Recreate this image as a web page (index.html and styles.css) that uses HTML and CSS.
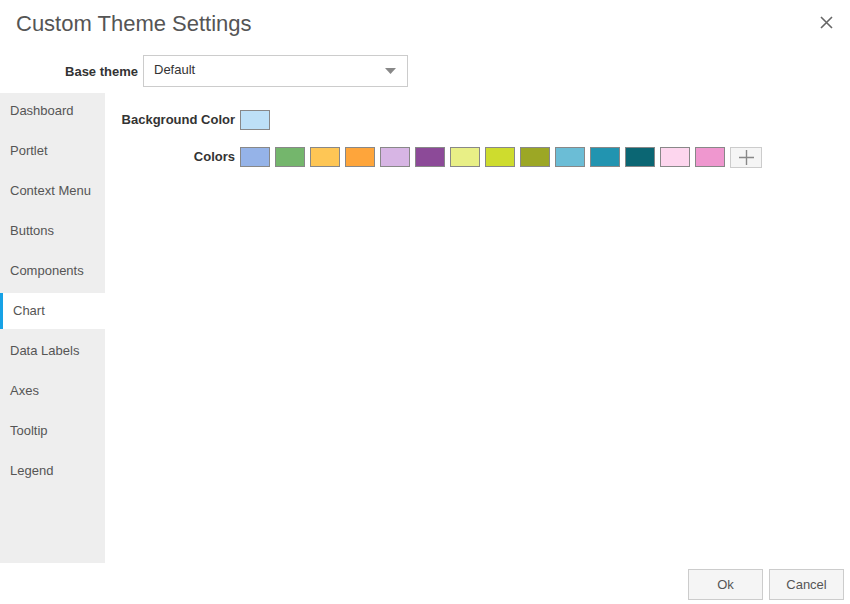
FILE: index.html
```html
<!DOCTYPE html>
<html>
<head>
<meta charset="utf-8">
<link rel="stylesheet" href="styles.css">
</head>
<body>
<div class="dialog">
  <div class="header">
    <h1 class="title">Custom Theme Settings</h1>
    <button class="close" aria-label="Close">
      <svg width="13" height="13" viewBox="0 0 13 13"><path d="M1 1L12 12M12 1L1 12" stroke="#666" stroke-width="1.6" fill="none"/></svg>
    </button>
  </div>
  <div class="base-row">
    <label class="base-label">Base theme</label>
    <div class="select">
      <span>Default</span>
      <svg class="arrow" width="11" height="6" viewBox="0 0 11 6"><path d="M0 0H11L5.5 6Z" fill="#888"/></svg>
    </div>
  </div>
  <div class="main">
    <ul class="sidebar">
      <li>Dashboard</li>
      <li>Portlet</li>
      <li>Context Menu</li>
      <li>Buttons</li>
      <li>Components</li>
      <li class="active">Chart</li>
      <li>Data Labels</li>
      <li>Axes</li>
      <li>Tooltip</li>
      <li>Legend</li>
    </ul>
    <div class="content">
      <div class="row">
        <div class="label">Background Color</div>
        <div class="swatches">
          <span class="swatch" style="background:#bde0f7"></span>
        </div>
      </div>
      <div class="row">
        <div class="label">Colors</div>
        <div class="swatches">
          <span class="swatch" style="background:#95b3e8"></span>
          <span class="swatch" style="background:#74b66c"></span>
          <span class="swatch" style="background:#fec655"></span>
          <span class="swatch" style="background:#fea53b"></span>
          <span class="swatch" style="background:#d7b5e4"></span>
          <span class="swatch" style="background:#8c4a98"></span>
          <span class="swatch" style="background:#e8ef86"></span>
          <span class="swatch" style="background:#cedc2e"></span>
          <span class="swatch" style="background:#9ca725"></span>
          <span class="swatch" style="background:#6bbdd6"></span>
          <span class="swatch" style="background:#2294b0"></span>
          <span class="swatch" style="background:#0b6673"></span>
          <span class="swatch" style="background:#fdd6ee"></span>
          <span class="swatch" style="background:#ef97cf"></span>
          <button class="add">
            <svg width="15" height="15" viewBox="0 0 15 15"><path d="M7.5 0V15M0 7.5H15" stroke="#888" stroke-width="1.4" fill="none"/></svg>
          </button>
        </div>
      </div>
    </div>
  </div>
  <div class="footer">
    <button class="btn">Ok</button>
    <button class="btn">Cancel</button>
  </div>
</div>
</body>
</html>
```
FILE: styles.css
```css
* { box-sizing: border-box; }
html, body {
  margin: 0;
  padding: 0;
  background: #fff;
  font-family: "Liberation Sans", Arial, sans-serif;
  color: #555;
}
.dialog {
  width: 850px;
  height: 604px;
  display: flex;
  flex-direction: column;
}
.header {
  height: 45px;
  display: flex;
  align-items: center;
  justify-content: space-between;
  padding: 0 17px 0 16px;
}
.title {
  margin: 0;
  font-size: 22px;
  font-weight: normal;
  color: #555;
  line-height: 1;
  padding-top: 3px;
}
.close {
  border: 0;
  background: none;
  padding: 0;
  width: 13px;
  height: 13px;
  display: flex;
}
.base-row {
  display: flex;
  align-items: center;
  margin-top: 10px;
  height: 32px;
}
.base-label {
  width: 138px;
  text-align: right;
  font-weight: bold;
  font-size: 13px;
  color: #333;
  padding-top: 1px;
}
.select {
  margin-left: 5px;
  width: 265px;
  height: 32px;
  border: 1px solid #ccc;
  display: flex;
  align-items: center;
  justify-content: space-between;
  padding: 0 11px 0 10px;
  font-size: 13px;
  color: #333;
}
.select span { margin-top: -3px; }
.main {
  display: flex;
  margin-top: 6px;
  height: 470px;
}
.sidebar {
  list-style: none;
  margin: 0;
  padding: 0;
  width: 105px;
  background: #eee;
}
.sidebar li {
  height: 36px;
  margin-bottom: 4px;
  display: flex;
  align-items: center;
  padding: 0 0 2px 10px;
  font-size: 13px;
  color: #555;
}
.sidebar li.active {
  background: #fff;
  border-left: 3px solid #17a2e6;
}
.content {
  flex: 1;
  padding-top: 17px;
  display: flex;
  flex-direction: column;
  gap: 17px;
}
.row {
  display: flex;
  align-items: center;
}
.label {
  width: 130px;
  text-align: right;
  font-weight: bold;
  font-size: 13px;
  color: #333;
  margin-top: -2px;
}
.swatches {
  margin-left: 5px;
  display: flex;
  gap: 5px;
}
.swatch {
  width: 30px;
  height: 20px;
  border: 1px solid #888;
  display: block;
}
.add {
  width: 32px;
  height: 21px;
  border: 1px solid #ccc;
  background: #f5f5f5;
  padding: 0;
  display: flex;
  align-items: center;
  justify-content: center;
}
.footer {
  display: flex;
  justify-content: flex-end;
  gap: 6px;
  padding: 6px 6px 0 0;
}
.btn {
  width: 75px;
  height: 31px;
  border: 1px solid #ccc;
  background: #f5f5f5;
  font-family: "Liberation Sans", Arial, sans-serif;
  font-size: 13px;
  color: #555;
  padding: 0;
}
```
